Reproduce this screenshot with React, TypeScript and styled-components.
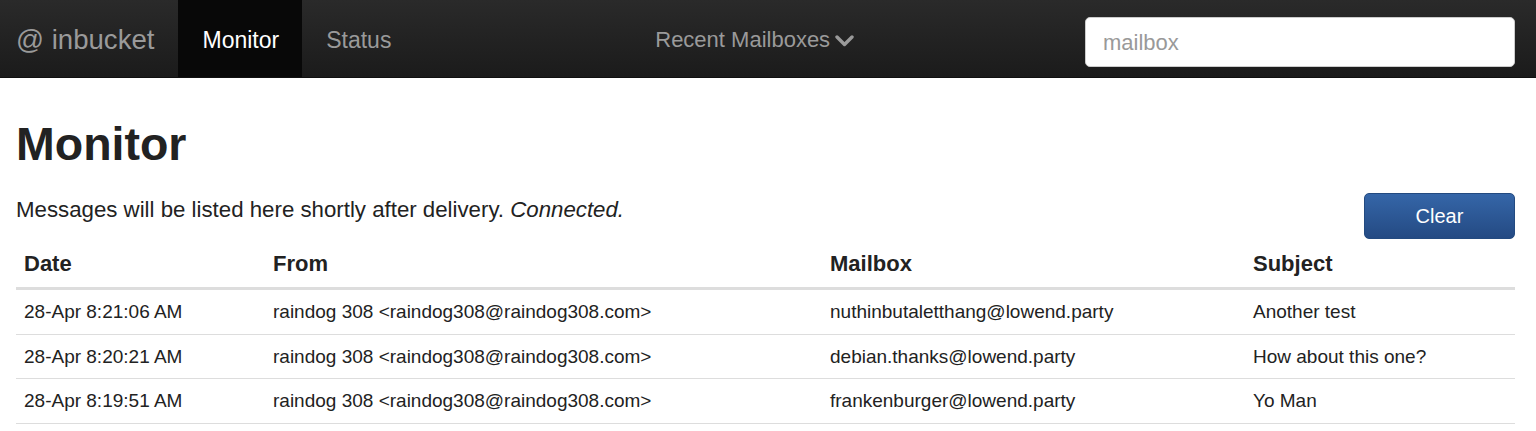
import React from "react";
import styled, { createGlobalStyle } from "styled-components";

const Global = createGlobalStyle`
  html, body { margin: 0; padding: 0; background: #fff; }
  body { font-family: "Liberation Sans", Arial, Helvetica, sans-serif; color: #333; }
  * { box-sizing: border-box; }
`;

const Navbar = styled.nav`
  height: 78px;
  display: flex;
  align-items: stretch;
  padding: 0 21px 0 16px;
  background: linear-gradient(to bottom, #2a2a2a 0%, #1b1b1b 100%);
  border-bottom: 1px solid #101010;
`;

const Brand = styled.a`
  display: flex;
  align-items: center;
  font-size: 27.6px;
  color: #9a9a9a;
  margin-right: 24px;
  text-decoration: none;
  padding-top: 3px;
`;

const NavItem = styled.a<{ $active?: boolean }>`
  display: flex;
  align-items: center;
  padding: 3px 23px 0 24px;
  font-size: 23px;
  color: ${(p) => (p.$active ? "#fff" : "#9a9a9a")};
  background: ${(p) => (p.$active ? "#080808" : "transparent")};
  text-decoration: none;
`;

const Middle = styled.div`
  flex: 1;
  display: flex;
  justify-content: center;
  padding-left: 9px;
`;

const Dropdown = styled(NavItem)`
  gap: 5px;
  font-size: 22px;
`;

const SearchWrap = styled.div`
  display: flex;
  align-items: center;
  padding-top: 6px;
`;

const Search = styled.input`
  width: 430px;
  height: 50px;
  border: 1px solid #ccc;
  border-radius: 5px;
  padding: 2px 17px 0;
  font-size: 22px;
  font-family: inherit;
  color: #555;
  outline: none;
  &::placeholder { color: #999; }
`;

const Container = styled.main`
  padding: 0 21px 0 16px;
`;

const Title = styled.h1`
  margin: 38px 0 0;
  font-size: 46.5px;
  font-weight: bold;
  line-height: 56px;
  color: #222;
`;

const Toolbar = styled.div`
  display: flex;
  justify-content: space-between;
  align-items: flex-start;
  margin-top: 19px;
`;

const Lead = styled.p`
  margin: 6px 0 0;
  font-size: 22.25px;
  line-height: 26px;
  color: #222;
  em { font-style: italic; }
`;

const ClearButton = styled.button`
  width: 151px;
  height: 46px;
  margin-top: 2px;
  border: 1px solid #234a80;
  border-radius: 5px;
  background: linear-gradient(to bottom, #3566a8 0%, #244a83 100%);
  color: #fff;
  font-size: 20px;
  font-family: inherit;
  cursor: pointer;
`;

const Table = styled.table`
  width: 100%;
  border-collapse: collapse;
  margin-top: 2px;
  table-layout: fixed;
`;

const Th = styled.th<{ $w: number }>`
  width: ${(p) => p.$w}px;
  text-align: left;
  font-size: 22px;
  font-weight: bold;
  color: #222;
  padding: 10px 8px 10px;
  line-height: 26px;
  border-bottom: 3px solid #ddd;
`;

const Td = styled.td`
  font-size: 19px;
  color: #222;
  padding: 10px 8px;
  line-height: 23.5px;
  border-bottom: 1px solid #ddd;
  white-space: nowrap;
`;

const Chevron = () => (
  <svg width="19" height="12" viewBox="0 0 19 12" style={{ marginTop: 2 }}>
    <polyline points="2,2 9.5,9.5 17,2" fill="none" stroke="#9a9a9a" strokeWidth="3.4" strokeLinecap="round" strokeLinejoin="round" />
  </svg>
);

const rows = [
  ["28-Apr 8:21:06 AM", "raindog 308 <raindog308@raindog308.com>", "nuthinbutaletthang@lowend.party", "Another test"],
  ["28-Apr 8:20:21 AM", "raindog 308 <raindog308@raindog308.com>", "debian.thanks@lowend.party", "How about this one?"],
  ["28-Apr 8:19:51 AM", "raindog 308 <raindog308@raindog308.com>", "frankenburger@lowend.party", "Yo Man"],
];

export default function App() {
  return (
    <>
      <Global />
      <Navbar>
        <Brand href="#">@ inbucket</Brand>
        <NavItem $active href="#">Monitor</NavItem>
        <NavItem href="#">Status</NavItem>
        <Middle>
          <Dropdown href="#">
            Recent Mailboxes
            <Chevron />
          </Dropdown>
        </Middle>
        <SearchWrap>
          <Search placeholder="mailbox" />
        </SearchWrap>
      </Navbar>
      <Container>
        <Title>Monitor</Title>
        <Toolbar>
          <Lead>
            Messages will be listed here shortly after delivery. <em>Connected.</em>
          </Lead>
          <ClearButton>Clear</ClearButton>
        </Toolbar>
        <Table>
          <thead>
            <tr>
              <Th $w={249}>Date</Th>
              <Th $w={557}>From</Th>
              <Th $w={423}>Mailbox</Th>
              <Th $w={270}>Subject</Th>
            </tr>
          </thead>
          <tbody>
            {rows.map((r) => (
              <tr key={r[0]}>
                {r.map((c, i) => (
                  <Td key={i}>{c}</Td>
                ))}
              </tr>
            ))}
          </tbody>
        </Table>
      </Container>
    </>
  );
}
